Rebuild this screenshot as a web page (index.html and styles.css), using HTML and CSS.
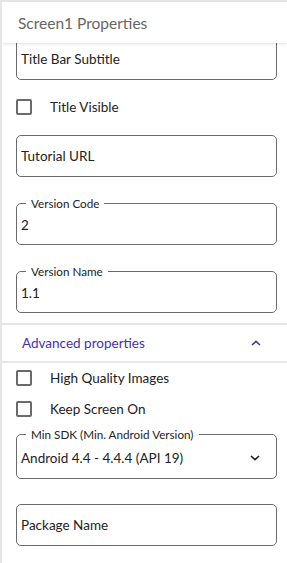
FILE: index.html
```html
<!DOCTYPE html>
<html lang="en">
<head>
<meta charset="UTF-8" />
<meta name="viewport" content="width=device-width, initial-scale=1" />
<title>Screen1 Properties</title>
<link rel="stylesheet" href="styles.css">
</head>
<body>

<div class="panel">
  <header class="panel-head">Screen1 Properties</header>

  <div class="panel-body">
    <div class="group">
      <div class="field first"><span class="value">Title Bar Subtitle</span></div>

      <label class="check first-check"><span class="box"></span>Title Visible</label>

      <div class="field gap-a"><span class="value">Tutorial URL</span></div>

      <div class="field labelled gap-b">
        <span class="legend">Version Code</span>
        <span class="value">2</span>
      </div>

      <div class="field labelled gap-b">
        <span class="legend">Version Name</span>
        <span class="value">1.1</span>
      </div>
    </div>

    <div class="section-head">
      <span>Advanced properties</span>
      <svg class="chev" width="10" height="6" viewBox="0 0 10 6"><path d="M1 5 L5 1.4 L9 5" fill="none" stroke="#4a2fa8" stroke-width="1.6"/></svg>
    </div>

    <div class="group">
      <label class="check adv-check"><span class="box"></span>High Quality Images</label>
      <label class="check adv-check2"><span class="box"></span>Keep Screen On</label>

      <div class="field labelled select gap-c">
        <span class="legend">Min SDK (Min. Android Version)</span>
        <span class="value">Android 4.4 - 4.4.4 (API 19)</span>
        <svg class="chev" width="10" height="6" viewBox="0 0 10 6"><path d="M1 1 L5 4.6 L9 1" fill="none" stroke="#222" stroke-width="1.6"/></svg>
      </div>

      <div class="field gap-d"><span class="value">Package Name</span></div>
    </div>
  </div>
</div>

</body>
</html>
```

FILE: styles.css
```css
body {
  margin: 0;
  background: #fff;
  font-family: Lato, 'Open Sans', sans-serif;
  color: #222;
}
.panel {
  height: 563px;
  border-left: 2px solid #e6e6e6;
  box-sizing: border-box;
  overflow: hidden;
  position: relative;
}
.panel-head {
  position: relative;
  z-index: 2;
  height: 41px;
  border-top: 2px solid #e4e4e4;
  background: #fff;
  padding-left: 16px;
  display: flex;
  align-items: center;
  font-size: 15.5px;
  color: #666;
  box-shadow: 0 1px 3px rgba(0,0,0,0.12);
}
.panel-body {
  position: relative;
  z-index: 1;
}
.group {
  padding: 0 10px 0 14px;
}
.field {
  position: relative;
  height: 42px;
  border: 1px solid #6a6a6a;
  border-radius: 5px;
  box-sizing: border-box;
  display: flex;
  align-items: center;
  padding: 0 4px;
  font-size: 13.5px;
}
.field.first {
  margin-top: -5px;
}
.field.labelled .value {
  margin-top: 2px;
}
.legend {
  position: absolute;
  left: 9px;
  top: -8px;
  background: #fff;
  padding: 0 5px;
  font-size: 11.7px;
  line-height: 14px;
  color: #222;
}
.gap-a { margin-top: 20px; }
.gap-b { margin-top: 26px; }
.gap-c { margin-top: 17px; height: 45px; }
.gap-d { margin-top: 25px; }
.select .value { flex: 1; }
.select .chev {
  margin-right: 12px;
  margin-top: 2px;
}
.check {
  display: flex;
  align-items: center;
  font-size: 13.5px;
  height: 16px;
}
.box {
  width: 16px;
  height: 16px;
  box-sizing: border-box;
  border: 2px solid #6a6a6a;
  border-radius: 2px;
  margin-right: 18px;
}
.first-check { margin-top: 19px; }
.adv-check { margin-top: 7px; }
.adv-check2 { margin-top: 15px; }
.section-head {
  margin-top: 10px;
  height: 40px;
  border-top: 2px solid #e6e6e6;
  border-bottom: 2px solid #e6e6e6;
  box-sizing: border-box;
  display: flex;
  align-items: center;
  justify-content: space-between;
  padding: 0 26px 0 20px;
  font-size: 13.5px;
  color: #4a2fa8;
}
```
